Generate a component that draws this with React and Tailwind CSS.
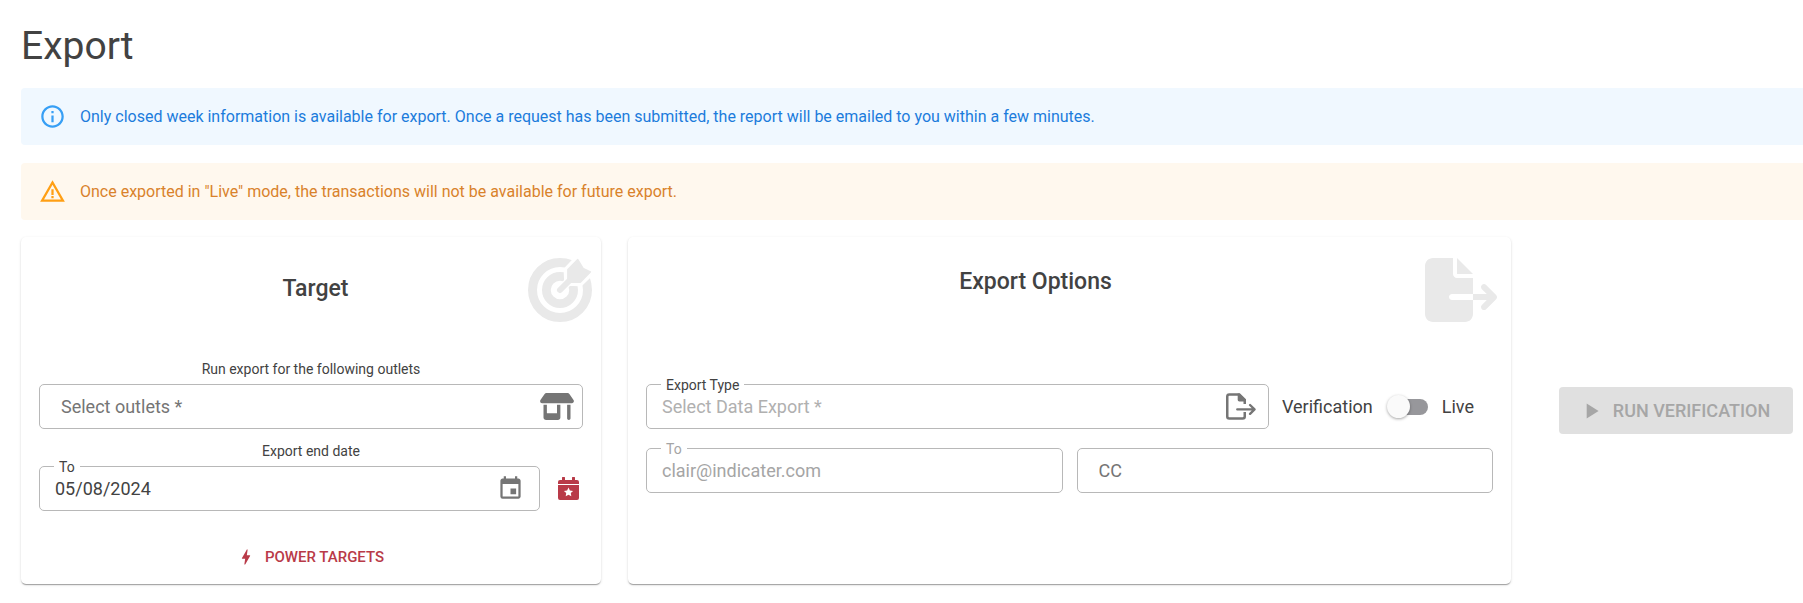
import { useState } from 'react'
import { MdInfoOutline, MdWarningAmber, MdEvent, MdBolt, MdPlayArrow } from 'react-icons/md'
import { FaFileExport, FaShop } from 'react-icons/fa6'

function TargetIcon({ className }) {
  return (
    <svg viewBox="0 0 512 512" className={className} fill="none" aria-hidden="true">
      <mask id="dart-gap">
        <rect width="512" height="512" fill="white" />
        <path
          d="M256 256L340 172M396 16L318 98L322 190L414 194L496 116L442 90L424 72Z"
          fill="black"
          stroke="black"
          strokeWidth="66"
          strokeLinejoin="round"
        />
      </mask>
      <g stroke="currentColor" mask="url(#dart-gap)">
        <circle cx="256" cy="256" r="220" strokeWidth="72" />
        <circle cx="256" cy="256" r="109" strokeWidth="70" />
      </g>
      <path d="M256 256L350 162" stroke="currentColor" strokeWidth="48" strokeLinecap="round" />
      <path
        d="M397 14L320 92V192H420L498 112L440 84Z"
        fill="currentColor"
        stroke="currentColor"
        strokeWidth="14"
        strokeLinejoin="round"
      />
    </svg>
  )
}

function FileArrowIcon({ className }) {
  return (
    <svg viewBox="0 0 576 512" className={className} fill="none" aria-hidden="true">
      <path
        d="M360 208V128L256 24H64Q24 24 24 64V448Q24 488 64 488H320Q360 488 360 448V360"
        stroke="currentColor"
        strokeWidth="48"
      />
      <path d="M224 8H256L376 128V160H256Q224 160 224 128Z" fill="currentColor" />
      <path
        d="M216 312H540M462 226L548 312L462 398"
        stroke="currentColor"
        strokeWidth="44"
        strokeLinecap="round"
        strokeLinejoin="round"
      />
    </svg>
  )
}

function CalendarStarIcon({ className }) {
  return (
    <svg viewBox="0 0 21 23" className={className} fill="currentColor" aria-hidden="true">
      <path d="M4 1a1 1 0 0 1 3 0v2h7V1a1 1 0 0 1 3 0v2h2a2 2 0 0 1 2 2v2H0V5a2 2 0 0 1 2-2h2z" />
      <path
        fillRule="evenodd"
        d="M0 8h21v13a2 2 0 0 1-2 2H2a2 2 0 0 1-2-2zM10.500 10.500l-1.400 2.900-3.200.5 2.300 2.200-.5 3.200 2.800-1.500 2.800 1.500-.5-3.200 2.300-2.200-3.200-.5z"
      />
    </svg>
  )
}

function Alert({ icon, className, children }) {
  return (
    <div role="alert" className={`flex h-[57px] items-center gap-[14px] rounded-l-[4px] pl-[18px] text-base ${className}`}>
      {icon}
      <p>{children}</p>
    </div>
  )
}

function Field({ id, label, labelClass = 'text-[#424242]', inset = 'pl-[15px]', inputClass = '', icon, className = '', ...props }) {
  return (
    <div className={`relative flex h-[45px] items-center rounded-[5px] border border-[#b8b8b8] ${className}`}>
      {label && (
        <label htmlFor={id} className={`absolute -top-2 left-[14px] bg-white px-[5px] text-sm leading-4 ${labelClass}`}>
          {label}
        </label>
      )}
      <input
        id={id}
        className={`h-full w-full min-w-0 flex-1 bg-transparent text-lg outline-none ${inset} ${inputClass}`}
        {...props}
      />
      {icon}
    </div>
  )
}

const CARD = 'rounded-[5px] bg-white shadow-[0_2px_1px_-1px_rgba(0,0,0,0.2),0_1px_1px_0_rgba(0,0,0,0.14),0_1px_3px_0_rgba(0,0,0,0.12)]'

export default function App() {
  const [date, setDate] = useState('05/08/2024')
  const [live, setLive] = useState(false)

  return (
    <main className="min-h-screen bg-white pt-[22px] pb-[18px] pl-[21px] font-['Roboto',sans-serif] text-[#424242]">
      <h1 className="text-[39px] leading-[48px]">Export</h1>

      <div className="mt-[18px] space-y-[18px]">
        <Alert className="bg-[#f0f8ff] text-[#1c7cdc]" icon={<MdInfoOutline className="size-[27px] text-[#379ff5]" />}>
          Only closed week information is available for export. Once a request has been submitted, the report will be
          emailed to you within a few minutes.
        </Alert>
        <Alert className="bg-[#fff8ee] text-[#d9822b]" icon={<MdWarningAmber className="size-[27px] text-[#ff9f14]" />}>
          Once exported in "Live" mode, the transactions will not be available for future export.
        </Alert>
      </div>

      <div className="mt-[17px] grid grid-cols-[580fr_883fr_265fr] gap-[27px]">
        <section className={`${CARD} pt-[21px] pb-2`}>
          <header className="flex pr-[9px] pl-[18px]">
            <h2 className="flex-1 pt-[15px] pl-16 text-center text-[23px] leading-8 font-medium">Target</h2>
            <TargetIcon className="size-16 text-[#e9e9e9]" />
          </header>
          <div className="px-[18px] pt-[37px]">
            <label htmlFor="outlets" className="mb-[5px] block text-center text-sm">
              Run export for the following outlets
            </label>
            <Field
              id="outlets"
              placeholder="Select outlets *"
              inset="pl-[21px]"
              inputClass="placeholder:text-[#757575]"
              icon={<FaShop className="mr-2 h-[27px] w-[34px] text-[#757575]" />}
            />
            <p className="mt-[12px] mb-[5px] text-center text-sm">Export end date</p>
            <div className="flex items-center">
              <Field
                id="end-date"
                label="To"
                className="flex-1"
                value={date}
                onChange={(e) => setDate(e.target.value)}
                icon={
                  <button aria-label="Open calendar" className="mr-[15px] text-[#757575]">
                    <MdEvent className="size-[27px]" />
                  </button>
                }
              />
              <button aria-label="Pick a special date" className="mr-1 ml-[18px] text-[#b93a48]">
                <CalendarStarIcon className="h-[23px] w-[21px]" />
              </button>
            </div>
            <button className="mx-auto mt-[27px] flex h-[38px] items-center gap-[9px] pr-[2px] text-[15px] font-medium text-[#b93a48]">
              <MdBolt className="size-5" />
              POWER TARGETS
            </button>
          </div>
        </section>

        <section className={`${CARD} pt-[21px] pb-2`}>
          <header className="flex pr-[14px] pl-[18px]">
            <h2 className="flex-1 pt-2 text-center text-[23px] leading-8 font-medium">Export Options</h2>
            <FaFileExport className="h-16 w-[72px] text-[#e9e9e9]" />
          </header>
          <div className="px-[18px] pt-[62px]">
            <div className="flex items-center">
              <Field
                id="export-type"
                label="Export Type"
                className="flex-1"
                placeholder="Select Data Export *"
                inputClass="placeholder:text-[#b0b0b0]"
                icon={<FileArrowIcon className="mr-3 h-[27px] w-[30px] text-[#757575]" />}
              />
              <div className="mr-[19px] ml-[13px] flex items-center text-lg">
                <label htmlFor="live-mode">Verification</label>
                <input
                  id="live-mode"
                  type="checkbox"
                  role="switch"
                  checked={live}
                  onChange={(e) => setLive(e.target.checked)}
                  className="mr-[14px] ml-[18px] flex h-4 w-[37px] appearance-none items-center rounded-full bg-[#97979b] before:-ml-1 before:size-[23px] before:shrink-0 before:rounded-full before:bg-[#fafafa] before:shadow-[0_1px_3px_rgba(0,0,0,0.35)] checked:before:ml-[18px]"
                />
                <label htmlFor="live-mode">Live</label>
              </div>
            </div>
            <div className="mt-[19px] grid grid-cols-2 gap-[14px]">
              <Field
                id="email-to"
                label="To"
                labelClass="text-[#a5a5a5]"
                inputClass="text-[#a5a5a5]"
                defaultValue="clair@indicater.com"
                disabled
              />
              <Field id="email-cc" aria-label="CC" placeholder="CC" inset="pl-[21px]" inputClass="placeholder:text-[#757575]" />
            </div>
          </div>
        </section>

        <div className="pt-[150px] pr-[10px] pl-[21px]">
          <button
            disabled
            className="flex h-[47px] w-full items-center justify-center gap-[9px] rounded-[4px] bg-[#e0e0e0] pr-1 text-lg font-medium whitespace-nowrap text-[#a6a6a6]"
          >
            <MdPlayArrow className="size-[26px]" />
            RUN VERIFICATION
          </button>
        </div>
      </div>
    </main>
  )
}
